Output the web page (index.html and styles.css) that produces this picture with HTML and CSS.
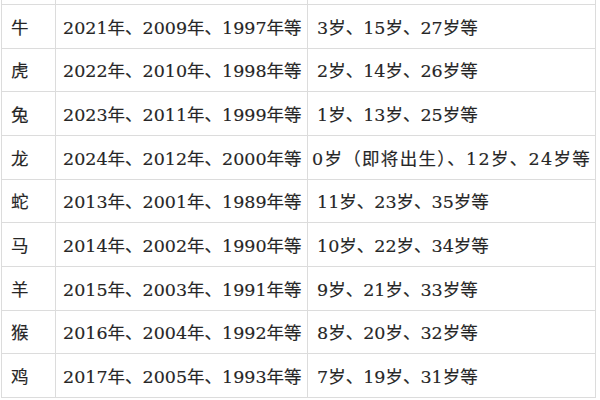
FILE: index.html
```html
<!DOCTYPE html>
<html lang="zh">
<head>
<meta charset="utf-8">
<link rel="stylesheet" href="styles.css">
</head>
<body>
<div class="table">
  <div class="cell spacer"></div><div class="cell spacer"></div><div class="cell spacer"></div>
  <div class="cell">牛</div><div class="cell years">2021年、2009年、1997年等</div><div class="cell">3岁、15岁、27岁等</div>
  <div class="cell">虎</div><div class="cell years">2022年、2010年、1998年等</div><div class="cell">2岁、14岁、26岁等</div>
  <div class="cell">兔</div><div class="cell years">2023年、2011年、1999年等</div><div class="cell">1岁、13岁、25岁等</div>
  <div class="cell">龙</div><div class="cell years">2024年、2012年、2000年等</div><div class="cell tight">0岁（即将出生）、12岁、24岁等</div>
  <div class="cell">蛇</div><div class="cell years">2013年、2001年、1989年等</div><div class="cell">11岁、23岁、35岁等</div>
  <div class="cell">马</div><div class="cell years">2014年、2002年、1990年等</div><div class="cell">10岁、22岁、34岁等</div>
  <div class="cell">羊</div><div class="cell years">2015年、2003年、1991年等</div><div class="cell">9岁、21岁、33岁等</div>
  <div class="cell">猴</div><div class="cell years">2016年、2004年、1992年等</div><div class="cell">8岁、20岁、32岁等</div>
  <div class="cell">鸡</div><div class="cell years">2017年、2005年、1993年等</div><div class="cell">7岁、19岁、31岁等</div>
</div>
</body>
</html>
```
FILE: styles.css
```css
html, body {
  margin: 0;
  padding: 0;
  background: #ffffff;
}
body {
  width: 600px;
  height: 400px;
  overflow: hidden;
}
.table {
  margin-left: 1px;
  width: 595px;
  display: grid;
  grid-template-columns: 54px 252px 288px;
  grid-template-rows: 5px repeat(9, 43.67px);
  border-left: 1px solid #dcdcdc;
  font-family: "DejaVu Serif", "Noto Sans CJK SC", serif;
  font-size: 17.5px;
  color: #262626;
  -webkit-text-stroke: 0.15px #262626;
}
.cell {
  box-sizing: border-box;
  border-right: 1px solid #dcdcdc;
  border-bottom: 1px solid #dcdcdc;
  padding-left: 9px;
  display: flex;
  align-items: center;
  white-space: nowrap;
}
.cell.years {
  padding-left: 7px;
}
.cell.tight {
  padding-left: 4px;
  letter-spacing: 1.3px;
}
```
